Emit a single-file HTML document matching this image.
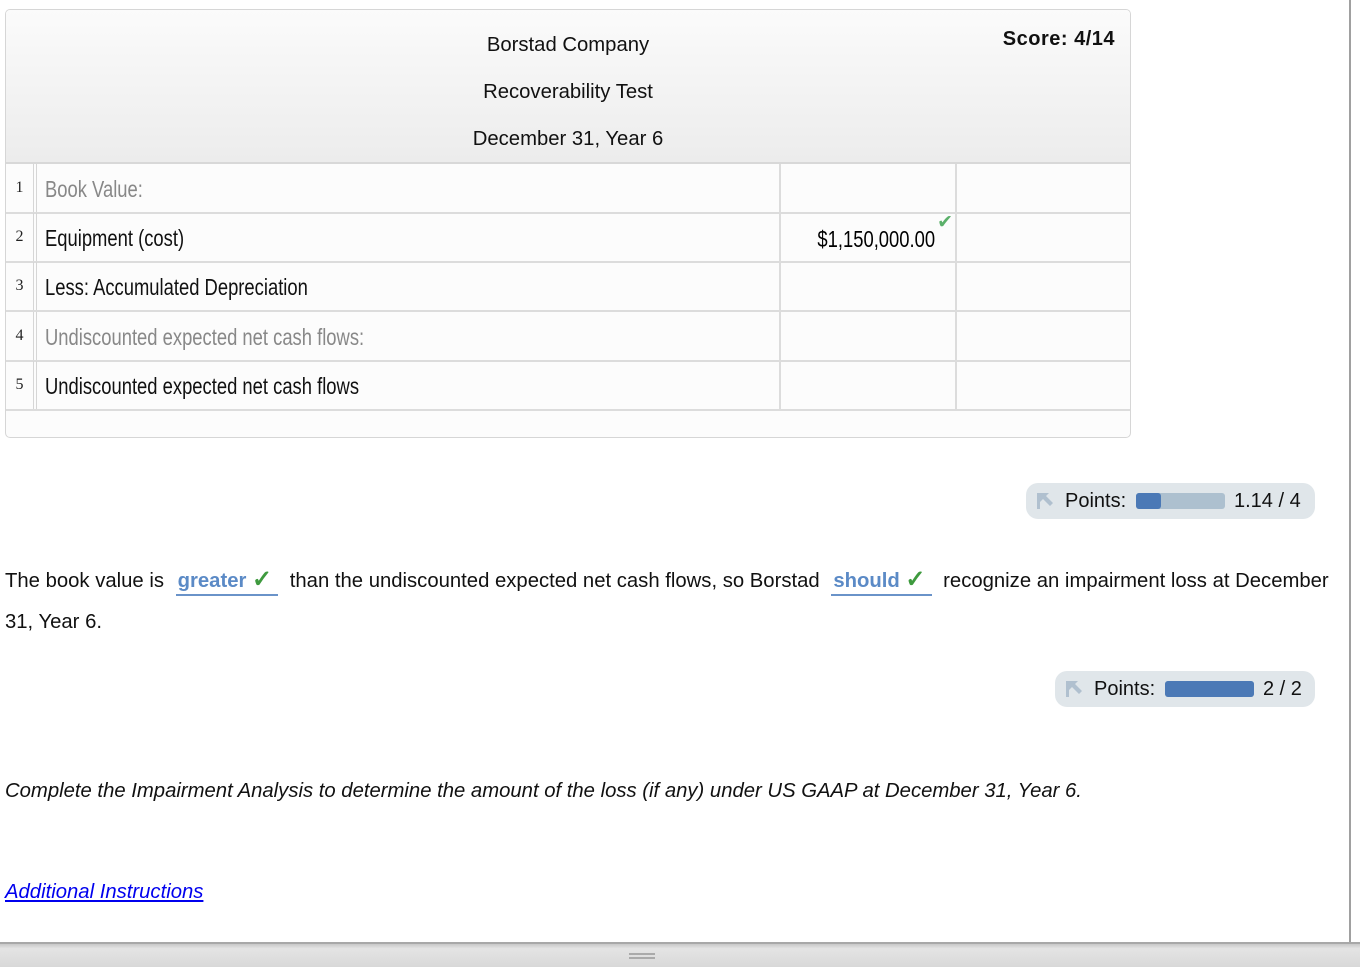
<!DOCTYPE html>
<html><head><style>
body{margin:0;width:1360px;height:965px;position:relative;background:#fff;font-family:"Liberation Sans",sans-serif;overflow:hidden}
.tbl{position:absolute;left:5px;top:9px;width:1124px;height:427px;border:1px solid #d6d6d6;border-radius:5px;background:#fcfcfc;overflow:hidden}
.hdr{position:absolute;left:0;top:0;width:100%;height:152px;background:linear-gradient(#fbfbfb,#ececec);border-bottom:2px solid #d8d8d8}
.h{position:absolute;left:0;width:1124px;text-align:center;font-size:20.3px;color:#111}
.score{position:absolute;right:15px;top:18px;font-size:20px;font-weight:bold;color:#111;letter-spacing:.5px}
.row{position:absolute;left:0;width:1124px;height:48px;border-bottom:2px solid #dcdcdc}
.num{position:absolute;left:0;width:27px;height:48px;line-height:48px;text-align:center;font-size:16px;color:#222;border-right:4px double #d6d6d6;font-family:"Liberation Serif",serif}
.lbl{position:absolute;left:39px;top:0;line-height:50px;font-size:23px;color:#111;transform:scaleX(.8);transform-origin:left;white-space:nowrap}
.g{color:#888}
.c3{position:absolute;left:773px;top:0;width:174px;height:48px;border-left:2px solid #dcdcdc;border-right:2px solid #dcdcdc}
.pts{position:absolute;height:36px;border-radius:12px;background:#e0e6ea;font-size:20px;color:#111;line-height:36px}
.bar{position:absolute;top:10px;height:16px;border-radius:3px;background:#adc0cf}
.fill{position:absolute;left:0;top:0;height:16px;border-radius:3px;background:#4b79b6}
.ic{position:absolute;left:11px;top:10px;width:19px;height:16px}
.p{position:absolute;left:5px;font-size:20.3px;color:#111;white-space:nowrap}
.dd{color:#5b8ac6;font-weight:bold;border-bottom:2px solid #6a93c9;padding:0 6px 2px 2px;margin:0 6px}
.ck{color:#3e9a3e;font-weight:bold;font-size:24px;line-height:10px}
</style></head><body>
<div class="tbl">
 <div class="hdr">
  <div class="h" style="top:24px">Borstad Company</div>
  <div class="h" style="top:71px">Recoverability Test</div>
  <div class="h" style="top:118px">December 31, Year 6</div>
  <div class="score">Score: 4/14</div>
 </div>
 <div class="row" style="top:154px"><div class="num">1</div><div class="lbl g">Book Value:</div><div class="c3"></div></div>
 <div class="row" style="top:203px"><div class="num">2</div><div class="lbl">Equipment (cost)</div><div class="c3"><span style="position:absolute;right:20px;top:0;line-height:52px;font-size:23px;transform:scaleX(.8);transform-origin:right;white-space:nowrap">$1,150,000.00</span><span style="position:absolute;right:2px;top:-2px;color:#5bb06a;font-size:19px">✔</span></div></div>
 <div class="row" style="top:252px"><div class="num">3</div><div class="lbl">Less: Accumulated Depreciation</div><div class="c3"></div></div>
 <div class="row" style="top:302px"><div class="num">4</div><div class="lbl g">Undiscounted expected net cash flows:</div><div class="c3"></div></div>
 <div class="row" style="top:351px"><div class="num">5</div><div class="lbl">Undiscounted expected net cash flows</div><div class="c3"></div></div>
</div>

<div class="pts" style="left:1026px;top:483px;width:289px">
 <svg class="ic" viewBox="0 0 19 16"><path d="M0 0H12L9 3L16 10L13 13L6 6L3 9V16H0Z" fill="#b0c0cf"/></svg>
 <span style="position:absolute;left:39px">Points:</span>
 <div class="bar" style="left:110px;width:89px"><div class="fill" style="width:25px"></div></div>
 <span style="position:absolute;left:208px">1.14 / 4</span>
</div>

<div class="p" style="top:570px">The book value is <span class="dd">greater <span class="ck">✓</span></span> than the undiscounted expected net cash flows, so Borstad <span class="dd">should <span class="ck">✓</span></span> recognize an impairment loss at December</div>
<div class="p" style="top:611px">31, Year 6.</div>

<div class="pts" style="left:1055px;top:671px;width:260px">
 <svg class="ic" viewBox="0 0 19 16"><path d="M0 0H12L9 3L16 10L13 13L6 6L3 9V16H0Z" fill="#b0c0cf"/></svg>
 <span style="position:absolute;left:39px">Points:</span>
 <div class="bar" style="left:110px;width:89px"><div class="fill" style="width:89px"></div></div>
 <span style="position:absolute;left:208px">2 / 2</span>
</div>

<div class="p" style="top:780px;font-style:italic">Complete the Impairment Analysis to determine the amount of the loss (if any) under US GAAP at December 31, Year 6.</div>
<div class="p" style="top:881px;font-style:italic;color:#0000ee;text-decoration:underline">Additional Instructions</div>

<div style="position:absolute;left:1349px;top:0;width:2px;height:943px;background:#a0a0a0"></div>
<div style="position:absolute;left:0;top:942px;width:1360px;height:23px;background:linear-gradient(#c8c8c8,#e4e4e4 20%,#d8d8d8);border-top:2px solid #a8a8a8"></div>
<div style="position:absolute;left:629px;top:953px;width:26px;height:2px;background:#aaa;box-shadow:0 4px 0 #aaa"></div>
</body></html>
